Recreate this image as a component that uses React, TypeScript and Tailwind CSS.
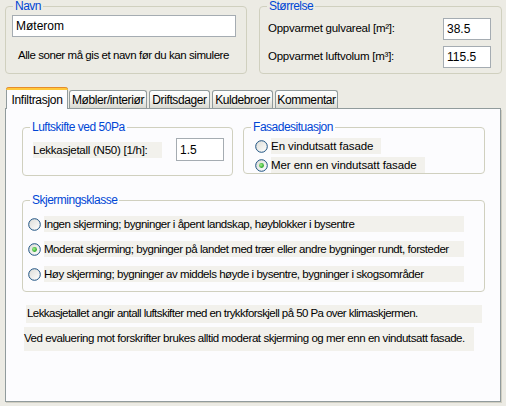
function GroupBox({
  title,
  className,
  bodyClass,
  children,
}: {
  title: string;
  className?: string;
  bodyClass?: string;
  children?: React.ReactNode;
}) {
  return (
    <fieldset className={`border border-[#D0D0BF] rounded-[4px] min-w-0 ${className ?? ''}`}>
      <legend className="ml-[7px] px-[2px] text-[#0046D5] text-[12px] tracking-[-0.5px] leading-[13px]">{title}</legend>
      <div className={bodyClass}>{children}</div>
    </fieldset>
  );
}

function TextBox({ value, className }: { value: string; className?: string }) {
  return (
    <div className={`border border-[#A5ACB2] bg-white pl-[3px] flex items-center ${className ?? ''}`}>
      <span className="text-[12px] tracking-normal">{value}</span>
    </div>
  );
}

function Radio({ checked }: { checked?: boolean }) {
  return (
    <svg width="13" height="13" viewBox="0 0 13 13" className="shrink-0">
      <defs>
        <linearGradient id="rbg" x1="0" y1="0" x2="1" y2="1">
          <stop offset="0" stopColor="#DCDCD7" />
          <stop offset="1" stopColor="#FFFFFF" />
        </linearGradient>
        <radialGradient id="rdot" cx="0.4" cy="0.4" r="0.6">
          <stop offset="0" stopColor="#A9F58F" />
          <stop offset="1" stopColor="#21A121" />
        </radialGradient>
      </defs>
      <circle cx="6.5" cy="6.5" r="5.8" fill="url(#rbg)" stroke="#1C5180" strokeWidth="1" />
      {checked && <circle cx="6.5" cy="6.5" r="2.4" fill="url(#rdot)" />}
    </svg>
  );
}

function Tab({ label, active, className }: { label: string; active?: boolean; className?: string }) {
  if (active) {
    return (
      <div
        className={`relative z-10 -mb-px h-[22px] flex items-center justify-center bg-[#FCFCFE] border-x border-[#919B9C] rounded-t-[3px] ${className ?? ''}`}
      >
        <div className="absolute left-[-1px] right-[-1px] top-0 h-[3px] rounded-t-[3px] bg-[#FFC83C] border-t border-[#E68B2C]" />
        <span className="mt-[3px] text-[12px] tracking-[-0.3px]">{label}</span>
      </div>
    );
  }
  return (
    <div
      className={`h-[18px] mt-[3px] flex items-center justify-center border border-b-0 border-[#919B9C] rounded-t-[3px] bg-gradient-to-b from-[#FFFFFF] via-[#F3F3EF] to-[#D9D9D1] ${className ?? ''}`}
    >
      <span className="text-[12px] tracking-[-0.4px]">{label}</span>
    </div>
  );
}

const opts = [
  { t: 'Ingen skjerming; bygninger i åpent landskap, høyblokker i bysentre', c: false },
  { t: 'Moderat skjerming; bygninger på landet med trær eller andre bygninger rundt, forsteder', c: true },
  { t: 'Høy skjerming; bygninger av middels høyde i bysentre, bygninger i skogsområder', c: false },
];

export default function App() {
  return (
    <div
      className="w-[506px] h-[406px] bg-[#ECEBE4] text-black text-[11.5px] tracking-[-0.3px] overflow-hidden"
      style={{ fontFamily: '"Liberation Sans", Arial, sans-serif' }}
    >
      {/* top group boxes */}
      <div className="flex gap-[12px] pl-[5px]">
        <GroupBox title="Navn" className="w-[242px] h-[74px]" bodyClass="px-[6px]">
          <TextBox value="Møterom" className="mt-[2px] w-[224px] h-[22px]" />
          <div className="mt-[12px] ml-[6px] leading-[13px] tracking-[-0.44px]">Alle soner må gis et navn før du kan simulere</div>
        </GroupBox>
        <GroupBox title="Størrelse" className="w-[243px] h-[74px]" bodyClass="pl-[8px] pr-[10px]">
          <div className="flex items-center justify-between mt-[5px]">
            <span className="tracking-[-0.25px]">Oppvarmet gulvareal [m²]:</span>
            <TextBox value="38.5" className="w-[48px] h-[22px]" />
          </div>
          <div className="flex items-center justify-between mt-[6px]">
            <span className="tracking-[-0.25px]">Oppvarmet luftvolum [m³]:</span>
            <TextBox value="115.5" className="w-[48px] h-[22px]" />
          </div>
        </GroupBox>
      </div>

      {/* tabs */}
      <div className="mt-[13px] ml-[5px] w-[496px]">
        <div className="flex items-end gap-[2px] pl-[1px] border-b border-[#919B9C]">
          <Tab label="Infiltrasjon" active className="w-[62px]" />
          <Tab label="Møbler/interiør" className="w-[78px] -ml-[1px]" />
          <Tab label="Driftsdager" className="w-[61px]" />
          <Tab label="Kuldebroer" className="w-[61px]" />
          <Tab label="Kommentar" className="w-[63px]" />
        </div>
        <div className="h-[293px] bg-[#FCFCFE] border-x border-b border-[#919B9C] shadow-[1px_1px_0_#D0CEC2] pt-[12px] pl-[16px] pr-[15px]">
          <div className="flex gap-[10px]">
            <GroupBox title="Luftskifte ved 50Pa" className="w-[212px] h-[55px]" bodyClass="pl-[10px] pr-[8px]">
              <div className="flex items-center justify-between mt-[4px]">
                <span className="bg-[#F2F1EC] pr-[14px] leading-[16px] tracking-[-0.25px]">Lekkasjetall (N50) [1/h]:</span>
                <TextBox value="1.5" className="w-[48px] h-[23px]" />
              </div>
            </GroupBox>
            <GroupBox title="Fasadesituasjon" className="w-[243px] h-[53px]" bodyClass="pl-[11px]">
              <div className="flex items-center gap-[3px] mt-[4px] leading-[16px]">
                <Radio />
                <span className="bg-[#F2F1EC] pr-[8px] tracking-[-0.1px]">En vindutsatt fasade</span>
              </div>
              <div className="flex items-center gap-[3px] mt-[3px] leading-[16px]">
                <Radio checked />
                <span className="bg-[#F2F1EC] pr-[8px] tracking-[-0.1px]">Mer enn en vindutsatt fasade</span>
              </div>
            </GroupBox>
          </div>

          <GroupBox title="Skjermingsklasse" className="mt-[18px] w-[463px] h-[98px]" bodyClass="pl-[5px]">
            <div className="flex flex-col gap-[9px] mt-[9px]">
              {opts.map((r) => (
                <div key={r.t} className="flex items-center gap-[3px] leading-[16px]">
                  <Radio checked={r.c} />
                  <span className="bg-[#F2F1EC] w-[420px] tracking-[-0.46px] whitespace-nowrap">{r.t}</span>
                </div>
              ))}
            </div>
          </GroupBox>

          <div className="mt-[13px] ml-[4px] w-[456px] h-[18px] bg-[#F2F1EC] flex items-center pl-[1px] tracking-[-0.56px] whitespace-nowrap">
            Lekkasjetallet angir antall luftskifter med en trykkforskjell på 50 Pa over klimaskjermen.
          </div>
          <div className="mt-[4px] ml-[2px] w-[450px] h-[24px] bg-[#F2F1EC] pt-[3px] leading-[16px] tracking-[-0.44px] whitespace-nowrap">
            Ved evaluering mot forskrifter brukes alltid moderat skjerming og mer enn en vindutsatt fasade.
          </div>
        </div>
      </div>
    </div>
  );
}
